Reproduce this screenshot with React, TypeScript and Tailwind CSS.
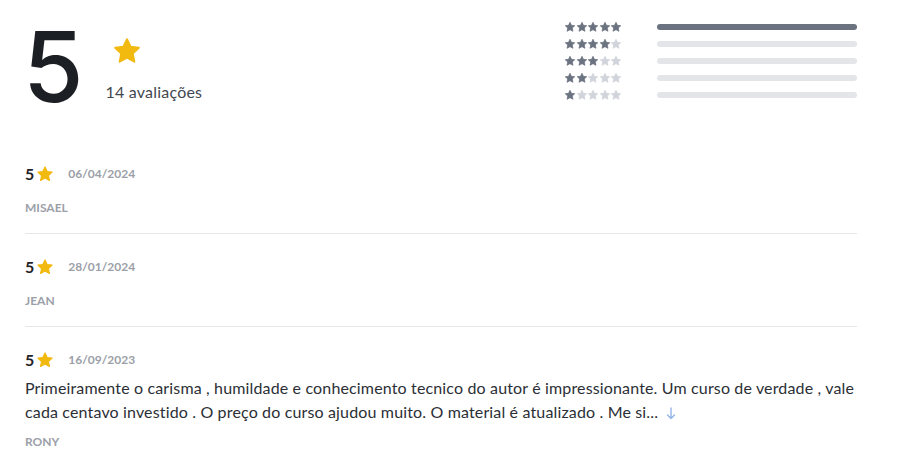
import React from "react";

const StarPath = "M12 2.5l2.9 6.1 6.6.8-4.9 4.6 1.3 6.6L12 17.3l-5.9 3.3 1.3-6.6-4.9-4.6 6.6-.8z";

function Star({ className, size }: { className: string; size: number }) {
  return (
    <svg width={size} height={size} viewBox="0 0 24 24" className={className}>
      <path d={StarPath} fill="currentColor" strokeLinejoin="round" stroke="currentColor" strokeWidth="1.5" />
    </svg>
  );
}

const rows = [5, 4, 3, 2, 1];

const reviews = [
  { date: "06/04/2024", name: "MISAEL", text: "" },
  { date: "28/01/2024", name: "JEAN", text: "" },
  {
    date: "16/09/2023",
    name: "RONY",
    text: "Primeiramente o carisma , humildade e conhecimento tecnico do autor é impressionante. Um curso de verdade , vale cada centavo investido . O preço do curso ajudou muito. O material é atualizado . Me si...",
  },
];

export default function App() {
  return (
    <div className="w-[920px] h-[453px] bg-white overflow-hidden px-[25px]" style={{ fontFamily: "Lato, 'Open Sans', sans-serif" }}>
      <div className="flex justify-between h-[140px]">
        <div className="flex items-start pt-[14px]">
          <div className="text-[98px] leading-none font-medium text-[#1c1f23] ml-[-2px] mt-[4px]" style={{ fontFamily: "Inter, sans-serif" }}>5</div>
          <div className="ml-[22px] flex flex-col">
            <Star size={30} className="text-[#f2b90f] ml-[6px] mt-[22px]" />
            <div className="text-[16px] tracking-[0.2px] text-[#3f4750] mt-[14px]">14 avaliações</div>
          </div>
        </div>
        <div className="flex flex-col gap-[5px] pt-[21px] mr-[38px]">
          {rows.map((r) => (
            <div key={r} className="flex items-center h-[12px]">
              <div className="flex w-[58px]">
                {[1, 2, 3, 4, 5].map((i) => (
                  <Star key={i} size={12} className={i <= r ? "text-[#6b7280] -mr-[0.4px]" : "text-[#d1d5db] -mr-[0.4px]"} />
                ))}
              </div>
              <div className={`ml-[35px] w-[200px] h-[6px] rounded-full ${r === 5 ? "bg-[#6b7280]" : "bg-[#e3e5e9]"}`} />
            </div>
          ))}
        </div>
      </div>
      <div className="w-[832px]">
        {reviews.map((rv, idx) => (
          <div key={idx} className={`${idx === 0 ? "pt-[24px]" : "pt-[23px]"} ${idx < 2 ? "pb-[17px] border-b border-[#e5e7eb]" : ""}`}>
            <div className="flex items-center h-[20px]">
              <span className="text-[16px] font-bold text-[#1f2328]">5</span>
              <Star size={18} className="text-[#f2b90f] ml-[2px]" />
              <span className="ml-[14px] text-[12px] font-bold text-[#9ba0a8]">{rv.date}</span>
            </div>
            {rv.text ? (
              <div className="mt-[6px] text-[16px] leading-[24px] tracking-[0.15px] text-[#2b2f36]">
                {rv.text}
                <svg width="10" height="13" viewBox="0 0 10 13" className="inline-block align-[-2px] ml-[8px]">
                  <path d="M5 1v10.5M1.5 8L5 11.5 8.5 8" fill="none" stroke="#93b4e6" strokeWidth="1.4" strokeLinecap="round" strokeLinejoin="round" />
                </svg>
              </div>
            ) : null}
            <div className={`${rv.text ? "mt-[10px]" : "mt-[16px]"} h-[16px] leading-[16px] text-[12px] font-bold text-[#9ba0a8]`}>{rv.name}</div>
          </div>
        ))}
      </div>
    </div>
  );
}
